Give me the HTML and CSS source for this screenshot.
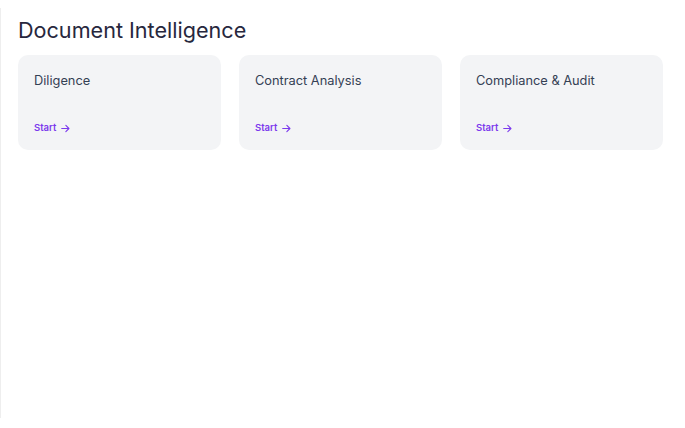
FILE: index.html
```html
<!DOCTYPE html>
<html lang="en">
<head>
<meta charset="utf-8">
<title>Document Intelligence</title>
<link rel="stylesheet" href="styles.css">
</head>
<body>
<main class="page">
  <h1 class="title">Document Intelligence</h1>
  <div class="cards">
    <a class="card" href="#">
      <span class="card-title">Diligence</span>
      <span class="card-link">Start
        <svg class="arrow" viewBox="0 0 16 16" width="11" height="11"><path d="M2.5 8h10.5M8.5 3.5l4.5 4.5-4.5 4.5" fill="none" stroke="currentColor" stroke-width="1.6" stroke-linecap="round" stroke-linejoin="round"/></svg>
      </span>
    </a>
    <a class="card" href="#">
      <span class="card-title">Contract Analysis</span>
      <span class="card-link">Start
        <svg class="arrow" viewBox="0 0 16 16" width="11" height="11"><path d="M2.5 8h10.5M8.5 3.5l4.5 4.5-4.5 4.5" fill="none" stroke="currentColor" stroke-width="1.6" stroke-linecap="round" stroke-linejoin="round"/></svg>
      </span>
    </a>
    <a class="card" href="#">
      <span class="card-title">Compliance &amp; Audit</span>
      <span class="card-link">Start
        <svg class="arrow" viewBox="0 0 16 16" width="11" height="11"><path d="M2.5 8h10.5M8.5 3.5l4.5 4.5-4.5 4.5" fill="none" stroke="currentColor" stroke-width="1.6" stroke-linecap="round" stroke-linejoin="round"/></svg>
      </span>
    </a>
  </div>
</main>
</body>
</html>
```
FILE: styles.css
```css
html, body {
  margin: 0;
  padding: 0;
  background: #ffffff;
}
body {
  font-family: Inter, "Noto Sans", sans-serif;
  padding: 8px 0 10px 0;
}
.page {
  border-left: 1px solid #eeeeee;
  height: 410px;
  box-sizing: border-box;
  padding: 8px 22px 0 17px;
}
.title {
  margin: 0 0 11px 0;
  font-size: 21.6px;
  line-height: 28px;
  font-weight: 400;
  color: #27273d;
  letter-spacing: 0;
}
.cards {
  display: grid;
  grid-template-columns: repeat(3, 203px);
  gap: 18px;
}
.card {
  display: flex;
  flex-direction: column;
  justify-content: space-between;
  height: 95px;
  box-sizing: border-box;
  padding: 17px 16px 16px 16px;
  background: #f3f4f6;
  border-radius: 10px;
  text-decoration: none;
}
.card-title {
  font-size: 12.8px;
  line-height: 18px;
  color: #344054;
}
.card-link {
  display: flex;
  align-items: center;
  gap: 4px;
  font-size: 9.5px;
  font-weight: 600;
  color: #7c3aed;
  line-height: 12px;
}
.arrow {
  display: block;
}
```
